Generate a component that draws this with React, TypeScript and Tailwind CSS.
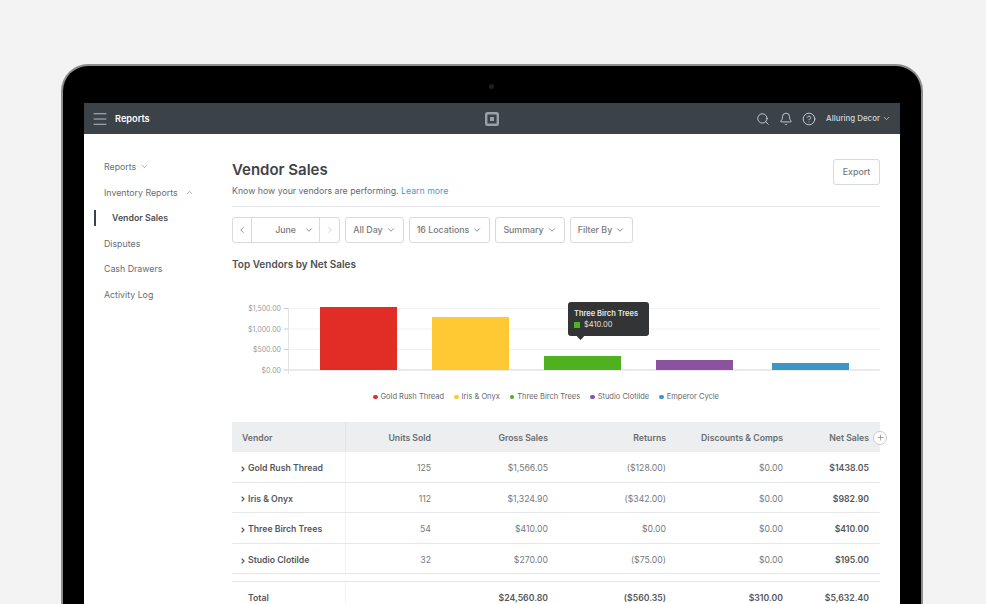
import { Bell, ChevronDown, ChevronLeft, ChevronRight, ChevronUp, CircleHelp, Menu, Plus, Search } from "lucide-react";

const vendors = [
    { name: "Gold Rush Thread", units: "125", gross: "$1,566.05", returns: "($128.00)", discounts: "$0.00", net: "$1438.05" },
    { name: "Iris & Onyx", units: "112", gross: "$1,324.90", returns: "($342.00)", discounts: "$0.00", net: "$982.90" },
    { name: "Three Birch Trees", units: "54", gross: "$410.00", returns: "$0.00", discounts: "$0.00", net: "$410.00" },
    { name: "Studio Clotilde", units: "32", gross: "$270.00", returns: "($75.00)", discounts: "$0.00", net: "$195.00" }
];

const bars = [
    { x: 88, y: 12, w: 77, fill: "#e22d26" },
    { x: 200, y: 22, w: 77, fill: "#ffc933" },
    { x: 312, y: 61, w: 77, fill: "#4fb120" },
    { x: 424, y: 65, w: 77, fill: "#8a529f" },
    { x: 540, y: 68, w: 77, fill: "#3c96c8" }
];

const ticks = [
    { y: 13.5, label: "$1,500.00" },
    { y: 34, label: "$1,000.00" },
    { y: 54.5, label: "$500.00" },
    { y: 75, label: "$0.00" }
];

const legend = [
    { name: "Gold Rush Thread", dot: "bg-[#d9342c]" },
    { name: "Iris & Onyx", dot: "bg-[#ffc933]" },
    { name: "Three Birch Trees", dot: "bg-[#4fa826]" },
    { name: "Studio Clotilde", dot: "bg-[#8a529f]" },
    { name: "Emperor Cycle", dot: "bg-[#3c96c8]" }
];

const grid = "grid grid-cols-[114px_85px_117px_118px_117px_97px] items-center";
const cell = "pt-[4px] text-right";

function FilterButton({ label, className }: { label: string; className: string }) {
    return (
        <button className={`flex h-[26px] items-center justify-center gap-[3px] rounded-[3px] border border-[#d8dadb] text-[8.8px] font-medium text-[#77797b] ${className}`}>
            {label}
            <ChevronDown size={10} strokeWidth={2} />
        </button>
    );
}

export default function App() {
    return (
        <div className="h-[604px] w-[986px] overflow-hidden bg-[#f3f3f3] pl-[61px] pt-[64px] font-['Inter',sans-serif]">
            <div className="h-[560px] w-[862px] rounded-t-[27px] border-2 border-b-0 border-[#8e8e8e] bg-black pl-[21px] pt-[37px]">
                <div className="relative">
                    <div className="absolute left-[405px] top-[-19px] size-[5px] rounded-full bg-[#1d1f21]" />
                </div>
                <div className="h-[520px] w-[816px] bg-white">
                    <header className="flex h-[31px] items-center justify-between bg-[#3b4248] pl-[7px] pr-[9px] text-white">
                        <div className="flex w-[394px] items-center gap-[6px]">
                            <Menu size={18} strokeWidth={1.1} className="text-[#d5d7d9]" />
                            <span className="pt-[1px] text-[9.2px] font-semibold">Reports</span>
                        </div>
                        <svg width="14" height="14" viewBox="0 0 14 14" className="text-[#9aa0a4]">
                            <path fillRule="evenodd" fill="currentColor" d="M2.5 0h9A2.5 2.5 0 0 1 14 2.5v9a2.5 2.5 0 0 1-2.5 2.5h-9A2.5 2.5 0 0 1 0 11.5v-9A2.5 2.5 0 0 1 2.5 0Zm.5 2.4a.6.6 0 0 0-.6.6v8c0 .3.3.6.6.6h8a.6.6 0 0 0 .6-.6V3a.6.6 0 0 0-.6-.6H3Z" />
                            <rect x="5" y="5" width="4" height="4" rx=".5" fill="currentColor" />
                        </svg>
                        <div className="flex w-[392px] items-center justify-end text-[#d5d7d9]">
                            <Search size={14} strokeWidth={1.5} />
                            <Bell size={14} strokeWidth={1.5} className="ml-[9px]" />
                            <CircleHelp size={14} strokeWidth={1.5} className="ml-[9px]" />
                            <span className="ml-[10px] pt-[1px] text-[7.9px] font-medium">Alluring Decor</span>
                            <ChevronDown size={9} strokeWidth={2} className="ml-[2px]" />
                        </div>
                    </header>

                    <div className="flex">
                        <nav className="w-[148px] pt-[20px] text-[8.8px] text-[#6a6d70]">
                            <div className="flex h-[25.5px] items-center gap-[4px] pl-[20px]">
                                Reports
                                <ChevronDown size={9} strokeWidth={1.5} />
                            </div>
                            <div className="flex h-[25.5px] items-center gap-[7px] pl-[20px]">
                                Inventory Reports
                                <ChevronUp size={9} strokeWidth={1.5} />
                            </div>
                            <div className="relative flex h-[25.5px] items-center pl-[28px] font-semibold text-[#4c5054]">
                                <span className="absolute left-[10px] top-[5px] h-[16px] w-[2px] bg-[#3b4248]" />
                                Vendor Sales
                            </div>
                            <div className="flex h-[25.5px] items-center pl-[20px]">Disputes</div>
                            <div className="flex h-[25.5px] items-center pl-[20px]">Cash Drawers</div>
                            <div className="flex h-[25.5px] items-center pl-[20px]">Activity Log</div>
                        </nav>

                        <main className="w-[648px] pt-[25px]">
                            <div className="flex h-[48px] items-start justify-between border-b border-[#e4e6e7]">
                                <div>
                                    <h1 className="text-[15px] font-semibold leading-[22px] text-[#3f4447]">Vendor Sales</h1>
                                    <p className="mt-[2px] text-[8.75px] leading-[16px] text-[#66696c]">
                                        Know how your vendors are performing. <span className="text-[#4a9cc9]">Learn more</span>
                                    </p>
                                </div>
                                <button className="h-[26px] w-[47px] rounded-[3px] border border-[#d8dadb] text-[8.9px] font-medium text-[#77797b]">
                                    Export
                                </button>
                            </div>

                            <div className="mt-[10px] flex gap-[5px]">
                                <div className="flex h-[26px] w-[108px] rounded-[3px] border border-[#d8dadb] text-[#77797b]">
                                    <div className="flex w-[19px] items-center justify-center border-r border-[#d8dadb]">
                                        <ChevronLeft size={10} strokeWidth={2} />
                                    </div>
                                    <div className="flex flex-1 items-center justify-end gap-[8px] pr-[5px] text-[8.8px] font-medium">
                                        June
                                        <ChevronDown size={10} strokeWidth={2} />
                                    </div>
                                    <div className="flex w-[20px] items-center justify-center border-l border-[#d8dadb] text-[#c8cacc]">
                                        <ChevronRight size={10} strokeWidth={2} />
                                    </div>
                                </div>
                                <FilterButton label="All Day" className="w-[59px]" />
                                <FilterButton label="16 Locations" className="w-[81px]" />
                                <FilterButton label="Summary" className="w-[70px]" />
                                <FilterButton label="Filter By" className="w-[63px]" />
                            </div>

                            <h2 className="mt-[14px] text-[10px] font-semibold leading-[14px] text-[#4c5054]">Top Vendors by Net Sales</h2>

                            <div className="relative mt-[24px] h-[90px]">
                                <svg width="648" height="90" viewBox="0 0 648 90">
                                    {ticks.map(t => (
                                        <g key={t.label}>
                                            <text x="49" y={t.y + 2.5} textAnchor="end" fontSize="7" fill="#9a9c9e">{t.label}</text>
                                            <line x1="52" x2="56.5" y1={t.y} y2={t.y} stroke="#c9cbcc" />
                                            <line x1="56.5" x2="648" y1={t.y} y2={t.y} stroke={t.y === 75 ? "#d5d7d8" : "#f0f1f2"} />
                                        </g>
                                    ))}
                                    <line x1="56.5" x2="56.5" y1="13" y2="79" stroke="#e2e3e4" />
                                    {bars.map(b => (
                                        <rect key={b.x} x={b.x} y={b.y} width={b.w} height={75 - b.y} fill={b.fill} />
                                    ))}
                                </svg>
                                <div className="absolute left-[336px] top-[7px] h-[34px] w-[81px] rounded-[3px] bg-[#333435] pl-[6px] pt-[6px] text-white">
                                    <div className="text-[7.5px] font-semibold leading-[11px] text-[#e8e8e8]">Three Birch Trees</div>
                                    <div className="flex items-center gap-[4px] text-[7.5px] leading-[11px] text-[#e0e0e0]">
                                        <span className="size-[6px] bg-[#4fb120]" />
                                        $410.00
                                    </div>
                                    <span className="absolute left-[10px] top-[31.5px] size-[5px] rotate-45 bg-[#333435]" />
                                </div>
                            </div>

                            <div className="mt-[5px] flex h-[14px] items-center gap-[10px] pl-[141px] text-[7.5px] text-[#66696c]">
                                {legend.map(l => (
                                    <div key={l.name} className="flex items-center gap-[3px]">
                                        <span className={`size-[4.5px] rounded-full ${l.dot}`} />
                                        {l.name}
                                    </div>
                                ))}
                            </div>

                            <div className="relative mt-[18px] text-[8.7px] text-[#77797b]">
                                <div className={`${grid} h-[30px] bg-[#eceeef] font-semibold text-[#6a6d70]`}>
                                    <div className="flex h-full items-center border-r border-[#e2e4e5] pl-[10px] pt-[3px]">Vendor</div>
                                    <div className="pt-[3px] text-right">Units Sold</div>
                                    <div className="pt-[3px] text-right">Gross Sales</div>
                                    <div className="pt-[3px] text-right">Returns</div>
                                    <div className="pt-[3px] text-right">Discounts &amp; Comps</div>
                                    <div className="pr-[11px] pt-[3px] text-right">Net Sales</div>
                                </div>
                                <span className="absolute right-[-7px] top-[8.5px] flex size-[14px] items-center justify-center rounded-full border border-[#c9cbcc] bg-white text-[#6a6d70]">
                                    <Plus size={9} strokeWidth={1.5} />
                                </span>
                                {vendors.map(v => (
                                    <div key={v.name} className={`${grid} h-[30.6px] border-b border-[#e4e6e7]`}>
                                        <div className="flex h-full items-center gap-[1px] border-r border-[#f1f2f3] pl-[7px] pt-[4px] font-semibold text-[#54585b]">
                                            <ChevronRight size={8} strokeWidth={3.5} />
                                            {v.name}
                                        </div>
                                        <div className={cell}>{v.units}</div>
                                        <div className={cell}>{v.gross}</div>
                                        <div className={cell}>{v.returns}</div>
                                        <div className={cell}>{v.discounts}</div>
                                        <div className={`${cell} pr-[11px] font-semibold text-[#54585b]`}>{v.net}</div>
                                    </div>
                                ))}
                                <div className={`${grid} mt-[7px] h-[34px] border-t border-[#e4e6e7] font-semibold text-[#54585b]`}>
                                    <div className="flex h-full items-center border-r border-[#f1f2f3] pl-[16px]">Total</div>
                                    <div />
                                    <div className="text-right">$24,560.80</div>
                                    <div className="text-right">($560.35)</div>
                                    <div className="text-right">$310.00</div>
                                    <div className="pr-[11px] text-right">$5,632.40</div>
                                </div>
                            </div>
                        </main>
                    </div>
                </div>
            </div>
        </div>
    );
}
